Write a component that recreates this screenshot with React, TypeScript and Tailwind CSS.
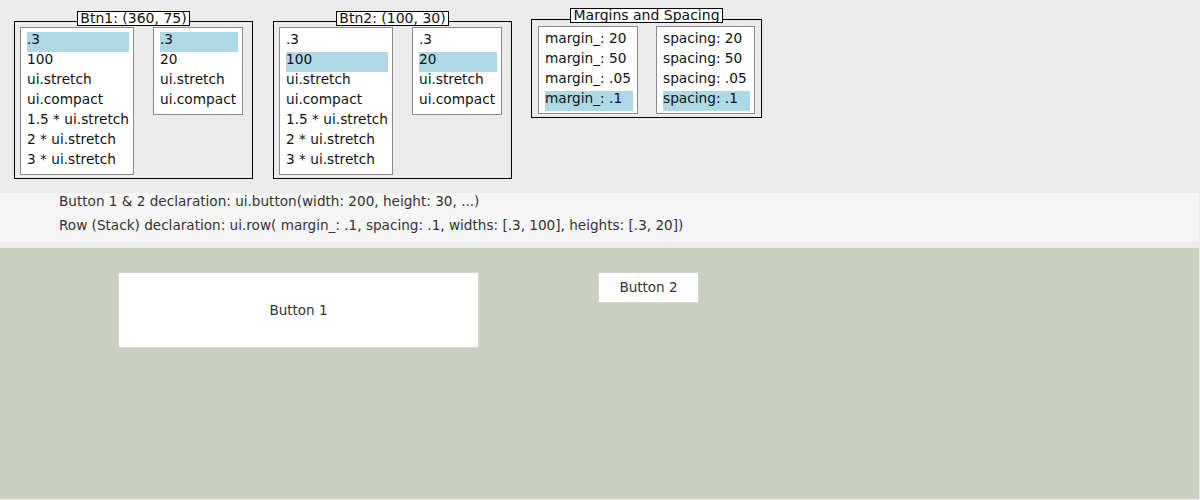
import React from "react";

interface ListCol {
  width: string;
  items: string[];
  active: number;
}

interface DemoBox {
  title: string;
  left: ListCol;
  right: ListCol;
}

const sizeItems = [".3", "100", "ui.stretch", "ui.compact", "1.5 * ui.stretch", "2 * ui.stretch", "3 * ui.stretch"];
const smallItems = [".3", "20", "ui.stretch", "ui.compact"];

const boxes: DemoBox[] = [
  {
    title: "Btn1: (360, 75)",
    left: { width: "w-[114px]", items: sizeItems, active: 0 },
    right: { width: "w-[90px]", items: smallItems, active: 0 },
  },
  {
    title: "Btn2: (100, 30)",
    left: { width: "w-[114px]", items: sizeItems, active: 1 },
    right: { width: "w-[90px]", items: smallItems, active: 1 },
  },
];

function List({ col }: { col: ListCol }) {
  return (
    <div className={`${col.width} bg-white border border-[#8a8a8a] pl-[6px] pr-[4px] pt-[4px] pb-[2px]`}>
      {col.items.map((item, i) => (
        <div
          key={item}
          className={`h-[20px] leading-[15px] whitespace-nowrap ${i === col.active ? "bg-[#add8e6]" : ""}`}
        >
          {item}
        </div>
      ))}
    </div>
  );
}

function Legend({ title, top }: { title: string; top: string }) {
  return (
    <div className={`absolute ${top} left-0 right-0 flex justify-center`}>
      <span className="bg-white border border-black px-[2px] h-[15px] leading-[12px] text-[14px]">{title}</span>
    </div>
  );
}

export default function App() {
  return (
    <div
      className="w-[1200px] h-[500px] bg-[#ebebeb] text-[#111] text-[13.7px]"
      style={{ fontFamily: '"DejaVu Sans", sans-serif' }}
    >
      <div className="h-[193px] flex items-start gap-[20px] pl-[14px]">
        {boxes.map((box) => (
          <div key={box.title} className="relative mt-[21px] w-[239px] h-[158px] border border-black flex items-start gap-[19px] pl-[5px] pt-[5px]">
            <Legend title={box.title} top="-top-[11px]" />
            <List col={box.left} />
            <List col={box.right} />
          </div>
        ))}
        <div className="relative -ml-[1px] mt-[19px] w-[231px] h-[99px] border border-black flex items-start gap-[18px] pl-[6px] pt-[6px]">
          <Legend title="Margins and Spacing" top="-top-[12px]" />
          <List col={{ width: "w-[100px]", items: ["margin_: 20", "margin_: 50", "margin_: .05", "margin_: .1"], active: 3 }} />
          <List col={{ width: "w-[99px]", items: ["spacing: 20", "spacing: 50", "spacing: .05", "spacing: .1"], active: 3 }} />
        </div>
      </div>

      <div className="w-[1199px] h-[49px] bg-[#f5f5f5] pl-[59px] text-[13.6px] text-[#333]">
        <div className="h-[24px] leading-[14px] pt-[1px]">Button 1 &amp; 2 declaration: ui.button(width: 200, height: 30, ...)</div>
        <div className="h-[24px] leading-[14px] pt-[1px]">Row (Stack) declaration: ui.row( margin_: .1, spacing: .1, widths: [.3, 100], heights: [.3, 20])</div>
      </div>

      <div className="mt-[6px] w-[1199px] h-[251px] bg-[#c9d1be] flex items-start gap-[119px] pl-[118px] pt-[24px]">
        <button className="w-[361px] h-[76px] bg-white border border-[#d4d4d4] text-[13.5px] text-[#333]">
          Button 1
        </button>
        <button className="w-[101px] h-[31px] bg-white border border-[#d4d4d4] text-[13.5px] text-[#333]">
          Button 2
        </button>
      </div>
    </div>
  );
}
